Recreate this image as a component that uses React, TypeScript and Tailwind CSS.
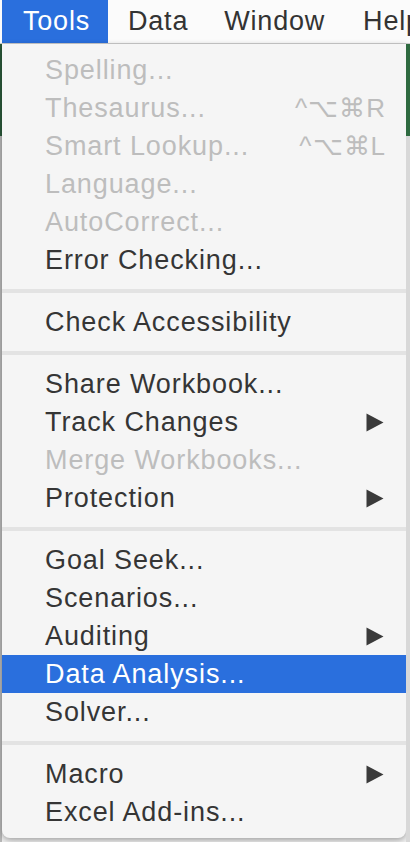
import { ReactNode } from "react"

type Item =
    | { kind: "item"; label: string; disabled?: boolean; shortcut?: string; submenu?: boolean; active?: boolean }
    | { kind: "sep" }

const ITEMS: Item[] = [
    { kind: "item", label: "Spelling...", disabled: true },
    { kind: "item", label: "Thesaurus...", disabled: true, shortcut: "^⌥⌘R" },
    { kind: "item", label: "Smart Lookup...", disabled: true, shortcut: "^⌥⌘L" },
    { kind: "item", label: "Language...", disabled: true },
    { kind: "item", label: "AutoCorrect...", disabled: true },
    { kind: "item", label: "Error Checking..." },
    { kind: "sep" },
    { kind: "item", label: "Check Accessibility" },
    { kind: "sep" },
    { kind: "item", label: "Share Workbook..." },
    { kind: "item", label: "Track Changes", submenu: true },
    { kind: "item", label: "Merge Workbooks...", disabled: true },
    { kind: "item", label: "Protection", submenu: true },
    { kind: "sep" },
    { kind: "item", label: "Goal Seek..." },
    { kind: "item", label: "Scenarios..." },
    { kind: "item", label: "Auditing", submenu: true },
    { kind: "item", label: "Data Analysis...", active: true },
    { kind: "item", label: "Solver..." },
    { kind: "sep" },
    { kind: "item", label: "Macro", submenu: true },
    { kind: "item", label: "Excel Add-ins..." },
]

function Arrow({ white }: { white?: boolean }) {
    return (
        <svg width="18" height="19" viewBox="0 0 18 19" className="shrink-0">
            <path d="M0.5 0.5 L17.5 9.5 L0.5 18.5 Z" fill={white ? "#ffffff" : "#3a3a3a"} />
        </svg>
    )
}

function Row({ children, active }: { children: ReactNode; active?: boolean }) {
    return (
        <div
            className={
                "h-[38px] flex items-center pl-[43px] pr-[22px] " +
                (active ? "bg-[#2a6fdd] text-white" : "")
            }
        >
            {children}
        </div>
    )
}

export default function App() {
    return (
        <div
            className="w-[410px] h-[842px] overflow-hidden bg-[#f1f1f1] flex flex-col"
            style={{ fontFamily: "'Liberation Sans', Arial, sans-serif" }}
        >
            {/* Menu bar */}
            <div className="h-[44px] shrink-0 flex items-stretch bg-[#fbfbfb] border-b border-[#cfcfcf] text-[27px] tracking-[0.8px] text-[#333333] whitespace-nowrap overflow-hidden">
                <div className="ml-[2px] w-[106px] shrink-0 bg-[#2a6fdd] text-white flex items-center justify-center pl-[3px]">Tools</div>
                <div className="flex items-center ml-[20px]">Data</div>
                <div className="flex items-center ml-[36px]">Window</div>
                <div className="flex items-center ml-[38px]">Help</div>
            </div>

            {/* Spreadsheet edges + dropdown */}
            <div className="flex-1 flex">
                <div className="w-[2px] flex flex-col">
                    <div className="h-[92px] bg-[#2b5a3a]" />
                    <div className="flex-1 bg-[#b9b9b9]" />
                </div>
                <div className="flex-1 h-[794px] bg-[#f5f5f5] rounded-b-[8px] shadow-[0_2px_6px_rgba(0,0,0,0.35)] pt-[7px] text-[27px] text-[#353535] tracking-[0.9px] whitespace-nowrap">
                    {ITEMS.map((it, i) =>
                        it.kind === "sep" ? (
                            <div key={i} className="h-[24px] flex items-center">
                                <div className="w-full h-[4px] bg-[#e3e3e3]" />
                            </div>
                        ) : (
                            <Row key={i} active={it.active}>
                                <span className={"flex-1 " + (it.disabled ? "text-[#bdbdbd]" : "")}>{it.label}</span>
                                {it.shortcut && (
                                    <span className="text-[#bdbdbd] text-[26px] tracking-[1px] -mr-[2px]">{it.shortcut}</span>
                                )}
                                {it.submenu && <Arrow white={it.active} />}
                            </Row>
                        )
                    )}
                </div>
                <div className="w-[4px] flex flex-col">
                    <div className="h-[92px] bg-[#2e6a40]" />
                    <div className="flex-1 bg-[#d8d8d8]" />
                </div>
            </div>
        </div>
    )
}
